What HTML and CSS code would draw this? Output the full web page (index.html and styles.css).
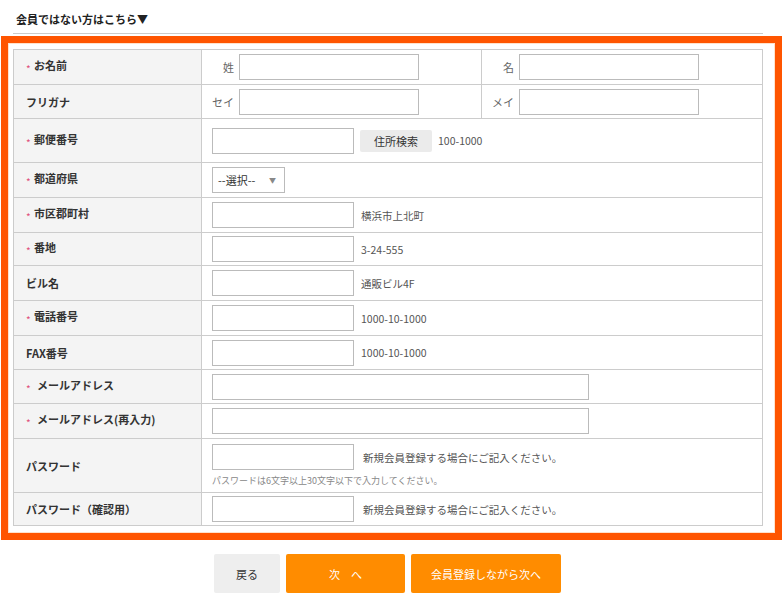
FILE: index.html
```html
<!DOCTYPE html>
<html lang="ja">
<head>
<meta charset="utf-8">
<title>お客様情報</title>
<link rel="stylesheet" href="styles.css">
</head>
<body>
<div class="page">
  <div class="section-head">会員ではない方はこちら▼</div>
  <div class="form-box">
    <table class="form-table">
      <tr class="r35">
        <th><span class="req">*</span>お名前</th>
        <td class="split">
          <div class="split-row">
            <div class="half"><span class="sub">姓</span><input class="in-name" type="text"></div>
            <div class="half"><span class="sub">名</span><input class="in-name" type="text"></div>
          </div>
        </td>
      </tr>
      <tr>
        <th>フリガナ</th>
        <td class="split">
          <div class="split-row">
            <div class="half"><span class="sub">セイ</span><input class="in-name" type="text"></div>
            <div class="half"><span class="sub">メイ</span><input class="in-name" type="text"></div>
          </div>
        </td>
      </tr>
      <tr class="tall">
        <th><span class="req">*</span>郵便番号</th>
        <td><div class="line"><input class="in-short" type="text"><button class="btn-search" type="button">住所検索</button><span class="hint">100-1000</span></div></td>
      </tr>
      <tr class="r35">
        <th><span class="req">*</span>都道府県</th>
        <td><div class="select"><span>--選択--</span><span class="arrow">▼</span></div></td>
      </tr>
      <tr class="r35">
        <th><span class="req">*</span>市区郡町村</th>
        <td><div class="line"><input class="in-short" type="text"><span class="hint">横浜市上北町</span></div></td>
      </tr>
      <tr class="r33">
        <th><span class="req">*</span>番地</th>
        <td><div class="line"><input class="in-short" type="text"><span class="hint">3-24-555</span></div></td>
      </tr>
      <tr class="r35">
        <th>ビル名</th>
        <td><div class="line"><input class="in-short" type="text"><span class="hint">通販ビル4F</span></div></td>
      </tr>
      <tr class="r35">
        <th><span class="req">*</span>電話番号</th>
        <td><div class="line"><input class="in-short" type="text"><span class="hint">1000-10-1000</span></div></td>
      </tr>
      <tr>
        <th>FAX番号</th>
        <td><div class="line"><input class="in-short" type="text"><span class="hint">1000-10-1000</span></div></td>
      </tr>
      <tr>
        <th><span class="req sp">*</span>メールアドレス</th>
        <td><input class="in-long" type="text"></td>
      </tr>
      <tr class="r35">
        <th><span class="req sp">*</span>メールアドレス(再入力)</th>
        <td><input class="in-long" type="text"></td>
      </tr>
      <tr class="pwrow">
        <th>パスワード</th>
        <td class="pw">
          <div class="line"><input class="in-short" type="password"><span class="hint big">新規会員登録する場合にご記入ください。</span></div>
          <div class="note">パスワードは6文字以上30文字以下で入力してください。</div>
        </td>
      </tr>
      <tr class="r33">
        <th>パスワード（確認用）</th>
        <td><div class="line"><input class="in-short" type="password"><span class="hint big">新規会員登録する場合にご記入ください。</span></div></td>
      </tr>
    </table>
  </div>
  <div class="actions">
    <button class="btn btn-back" type="button">戻る</button>
    <button class="btn btn-next" type="button">次　へ</button>
    <button class="btn btn-reg" type="button">会員登録しながら次へ</button>
  </div>
</div>
</body>
</html>
```
FILE: styles.css
```css
* { box-sizing: border-box; }
html, body { margin: 0; padding: 0; background: #fff; }
body {
  font-family: "Noto Sans CJK JP", "Noto Sans", sans-serif;
  font-size: 11px;
  color: #333;
}
.page { width: 782px; }
.section-head {
  margin-left: 13px;
  width: 750px;
  height: 34px;
  padding: 11px 0 0 3px;
  border-bottom: 1px solid #ccc;
  font-weight: bold;
  font-size: 11px;
  color: #222;
  line-height: 16px;
}
.form-box {
  margin: 2px 0 0 1px;
  width: 781px;
  border: 7px solid #ff5500;
  box-shadow: inset 0 0 0 1px #ffe2cc;
  padding: 6px 11px 7px 5px;
}
.form-table {
  width: 750px;
  border-collapse: collapse;
  border: 1px solid #ccc;
}
.form-table th, .form-table td {
  border: 1px solid #ccc;
  vertical-align: middle;
}
.form-table th {
  width: 188px;
  background: #f4f4f4;
  text-align: left;
  font-weight: bold;
  font-size: 11px;
  color: #333;
  padding: 0 0 0 12px;
  height: 34px;
  line-height: 14px;
}
.form-table td {
  padding: 3px 10px;
  height: 34px;
}
.form-table tr.r35 th, .form-table tr.r35 td { height: 35px; }
.form-table tr.r33 th, .form-table tr.r33 td { height: 33px; }
.form-table tr.tall th, .form-table tr.tall td { height: 44px; }
.form-table tr.pwrow th, .form-table tr.pwrow td { height: 54px; }
.req {
  color: #e0507a;
  font-size: 10px;
  font-weight: normal;
  margin-right: 2px;
  display: inline-block;
  width: 6px;
  vertical-align: -3px;
}
.req.sp { margin-right: 5px; }
.form-table td.split { padding: 0; }
.split-row { display: flex; }
.half {
  display: flex;
  align-items: center;
  width: 50%;
  height: 33px;
}
.r35 .half { height: 34px; }
.half:first-child { border-right: 1px solid #ccc; }
.sub {
  width: 32px;
  text-align: right;
  color: #666;
  font-size: 11px;
  margin-right: 5px;
}
input {
  display: block;
  height: 26px;
  border: 1px solid #bbb;
  background: #fff;
  margin: 0;
  padding: 0 4px;
  font-family: inherit;
  font-size: 11px;
}
.in-name { width: 180px; }
.in-short { width: 142px; }
.in-long { width: 377px; }
.line { display: flex; align-items: center; }
.hint {
  color: #555;
  font-size: 10.5px;
  margin-left: 7px;
}
.hint.big { margin-left: 9px; }
.btn-search {
  margin-left: 6px;
  width: 72px;
  height: 22px;
  border: none;
  border-radius: 2px;
  background: #ebebeb;
  color: #333;
  font-family: inherit;
  font-size: 11px;
  padding: 0;
}
.btn-search + .hint { margin-left: 6px; }
.select {
  display: flex;
  align-items: center;
  justify-content: space-between;
  width: 73px;
  height: 26px;
  border: 1px solid #bbb;
  padding: 0 8px 0 5px;
  font-size: 11px;
  color: #333;
}
.select .arrow { font-size: 7px; color: #888; }
.form-table td.pw { padding-top: 3px; padding-bottom: 3px; }
.note {
  margin-top: 5px;
  font-size: 9px;
  color: #888;
  line-height: 12px;
}
.actions {
  display: flex;
  justify-content: center;
  gap: 6px;
  margin-top: 14px;
  padding-right: 7px;
}
.btn {
  height: 39px;
  border: none;
  border-radius: 2px;
  font-family: inherit;
  font-size: 11px;
  padding: 0;
}
.btn-back { width: 66px; background: #eee; color: #333; }
.btn-next { width: 119px; background: #ff8c00; color: #fff; }
.btn-reg { width: 150px; background: #ff8c00; color: #fff; }
```
